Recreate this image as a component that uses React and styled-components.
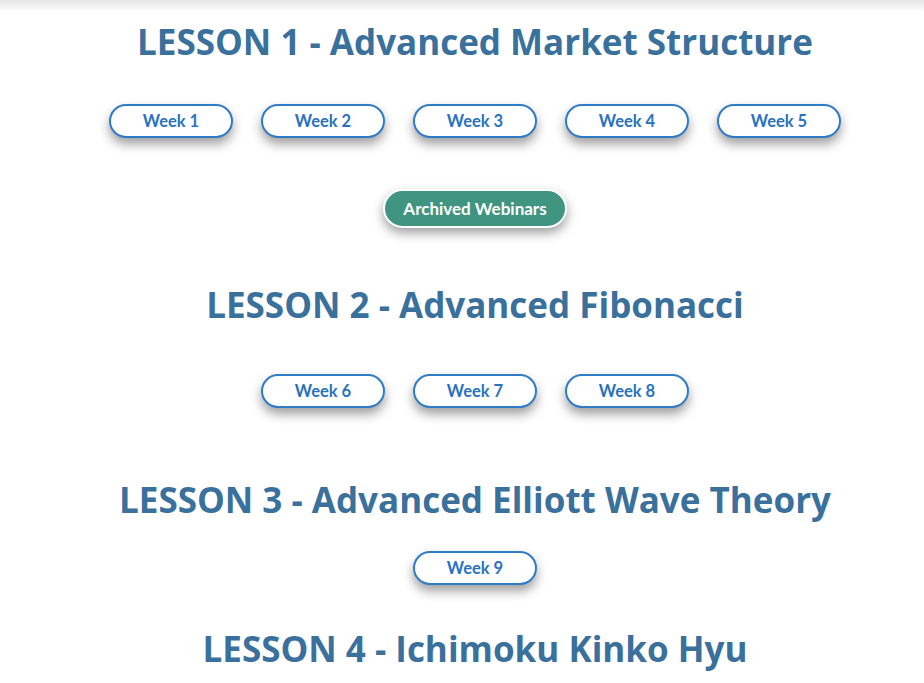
import React from 'react'
import styled, { createGlobalStyle } from 'styled-components'

const GlobalStyle = createGlobalStyle`
  html, body {
    margin: 0;
    padding: 0;
    background: #ffffff;
  }
`

const Page = styled.div`
  position: relative;
  min-height: 683px;
  padding: 0 0 0 26px;
  box-sizing: border-box;
  display: flex;
  flex-direction: column;
  align-items: center;
`

// faint shadow from a header sitting just above the viewport
const TopShade = styled.div`
  position: absolute;
  top: 0;
  left: 0;
  right: 0;
  height: 12px;
  background: linear-gradient(to bottom, rgba(0, 0, 0, 0.1), rgba(0, 0, 0, 0));
`

const Title = styled.h2`
  margin: ${props => props.top}px 0 0;
  font-family: 'Open Sans', sans-serif;
  font-weight: 700;
  font-size: 35px;
  line-height: 44px;
  color: #3a709c;
  text-align: center;
  white-space: nowrap;
`

const Row = styled.div`
  display: flex;
  justify-content: center;
  gap: 28px;
  margin-top: ${props => props.top}px;
`

const WeekButton = styled.a`
  display: flex;
  align-items: center;
  justify-content: center;
  width: 124px;
  height: 34px;
  box-sizing: border-box;
  border: 2px solid #2f7bc6;
  border-radius: 17px;
  background: #ffffff;
  color: #2a72bf;
  font-family: Lato, sans-serif;
  font-weight: 700;
  font-size: 16.5px;
  text-decoration: none;
  box-shadow: 0 6px 11px rgba(0, 0, 0, 0.38);
  cursor: pointer;
`

const ArchiveButton = styled.a`
  display: flex;
  align-items: center;
  justify-content: center;
  width: 184px;
  height: 39px;
  box-sizing: border-box;
  margin-top: ${props => props.top}px;
  border: 2px solid #ffffff;
  border-radius: 20px;
  background: #3f9580;
  color: #ffffff;
  font-family: Lato, sans-serif;
  font-weight: 700;
  font-size: 17px;
  text-decoration: none;
  box-shadow: 0 5px 11px rgba(0, 0, 0, 0.38);
  cursor: pointer;
`

const lessons = [
  { title: 'LESSON 1 - Advanced Market Structure', weeks: [1, 2, 3, 4, 5], top: 20, rowTop: 40, archive: true },
  { title: 'LESSON 2 - Advanced Fibonacci', weeks: [6, 7, 8], top: 55, rowTop: 47 },
  { title: 'LESSON 3 - Advanced Elliott Wave Theory', weeks: [9], top: 70, rowTop: 29 },
  { title: 'LESSON 4 - Ichimoku Kinko Hyu', weeks: [], top: 42 },
]

export default function App() {
  return (
    <>
      <GlobalStyle />
      <Page>
        <TopShade />
        {lessons.map(lesson => (
          <React.Fragment key={lesson.title}>
            <Title top={lesson.top}>{lesson.title}</Title>
            {lesson.weeks.length > 0 && (
              <Row top={lesson.rowTop}>
                {lesson.weeks.map(w => (
                  <WeekButton key={w}>Week {w}</WeekButton>
                ))}
              </Row>
            )}
            {lesson.archive && <ArchiveButton top={51}>Archived Webinars</ArchiveButton>}
          </React.Fragment>
        ))}
      </Page>
    </>
  )
}
